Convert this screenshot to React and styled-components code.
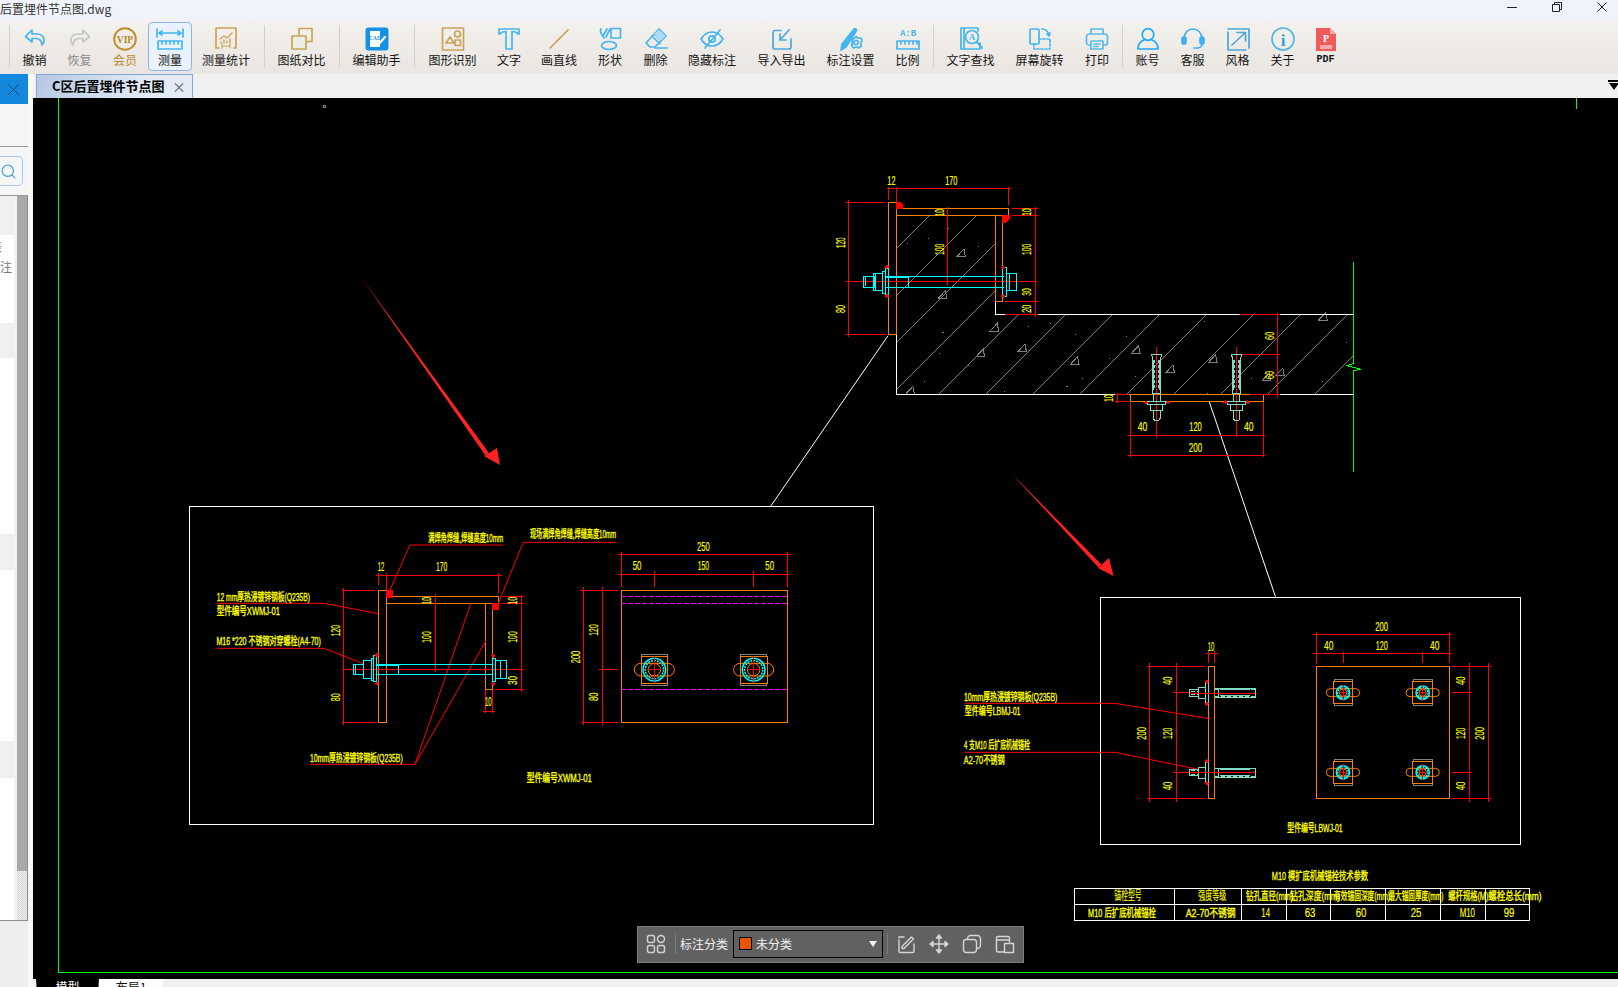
import React from 'react';
import styled, { createGlobalStyle } from 'styled-components';
import { Search } from 'lucide-react';

const GlobalStyle = createGlobalStyle`
    html, body { margin:0; padding:0; background:#efefef; }
    body { font-family:"Noto Sans CJK SC","Liberation Sans",sans-serif; overflow:hidden; }
`;

const Page = styled.div`
    width:1618px;
    height:987px;
    display:flex;
    flex-direction:column;
    overflow:hidden;
`;

/* ---------- title bar ---------- */
const TitleBar = styled.div`
    height:20px;
    flex:none;
    background:#f0f3fb;
    display:flex;
    align-items:flex-start;
    justify-content:space-between;
`;
const TitleText = styled.div`
    font-size:12px;
    line-height:18px;
    color:#333;
    white-space:nowrap;
`;
const WindowButtons = styled.div`
    display:flex;
    align-items:center;
    gap:35px;
    padding:2px 11px 0 0;
`;
const WindowIcon = styled.svg`
    width:10px;
    height:10px;
    display:block;
    fill:none;
    stroke:#222;
    stroke-width:1;
`;

/* ---------- toolbar ---------- */
const Toolbar = styled.div`
    height:54px;
    flex:none;
    box-sizing:border-box;
    background:linear-gradient(#f4f2ee,#e9e5e0);
    display:flex;
    align-items:flex-start;
    padding:2px 0 0 7px;
`;
const Separator = styled.div`
    width:1px;
    height:43px;
    background:#d4d1cd;
    margin:3px ${props => props.$gap || 3}px 0 ${props => props.$gap || 4}px;
    flex:none;
`;
const ToolButton = styled.div`
    width:${props => props.$w}px;
    height:49px;
    flex:none;
    box-sizing:border-box;
    display:flex;
    flex-direction:column;
    align-items:center;
    justify-content:space-between;
    padding:4px 0 3px;
    border:1px solid ${props => props.$active ? '#8fb4ec' : 'transparent'};
    border-radius:4px;
    background:${props => props.$active ? '#eaf3fd' : 'transparent'};
`;
const ToolLabel = styled.span`
    font-family:${props => props.$mono ? '"Liberation Mono",monospace' : 'inherit'};
    font-size:${props => props.$mono ? 10 : 12}px;
    font-weight:${props => props.$mono ? 700 : 400};
    line-height:15px;
    white-space:nowrap;
    color:${props => props.$tone === 'gold' ? '#b98a2e' : props.$tone === 'off' ? '#8a8a8a' : '#141414'};
`;
const IconFrame = styled.svg`
    width:${props => props.$w || 24}px;
    height:24px;
    display:block;
    flex:none;
    fill:none;
    stroke:${props => props.$c || '#45b5ee'};
    stroke-width:1.7;
    stroke-linejoin:round;
    stroke-linecap:round;
`;
const IconText = styled.text`
    font-family:"Liberation Serif",serif;
    font-weight:700;
    stroke:none;
    text-anchor:middle;
`;

const BLUE = '#45b5ee';
const GOLD = '#c9a45a';

const icons = {
    undo: <IconFrame><path d="M9 3 2.5 9.5 9 15v-3.5h4c3.5 0 5.5 2 6 6.5 1.3-1.5 2-3.3 2-5C21 9 17.5 7 14 7H9z" /></IconFrame>,
    redo: <IconFrame $c="#c4c4c4"><path d="M15 3l6.500 6.500L15 15v-3.500h-4c-3.500 0-5.500 2-6 6.500-1.300-1.500-2-3.300-2-5C3 9 6.500 7 10 7h5z" /></IconFrame>,
    vip: (
        <IconFrame $c="#c08f2e" viewBox="0 0 24 24">
            <circle cx="12" cy="12" r="10.800" strokeWidth="2" />
            <IconText x="12" y="15.500" fontSize="9.500" fill="#b5842a">VIP</IconText>
        </IconFrame>
    ),
    measure: (
        <IconFrame $w={28} viewBox="0 0 28 24" strokeWidth="1.300">
            <path d="M1 2v8M27 2v8M3 6h22M3 6l3-2M3 6l3 2M25 6l-3-2M25 6l-3 2" />
            <path d="M2 14h24v8H2zM6 14v3M10 14v3M14 14v3M18 14v3M22 14v3" />
        </IconFrame>
    ),
    stats: (
        <IconFrame $c={GOLD}>
            <path d="M5 21H2V1h20v20h-2" />
            <path d="M6 12l4-3 3 2 5-5M7 16v-1M10 16v-3M13 16v-2M16 16v-4" strokeWidth="1.400" />
            <path d="M8 19h8M8 17v4M16 17v4" strokeWidth="1.200" />
        </IconFrame>
    ),
    compare: (
        <IconFrame $c={GOLD} strokeWidth="2.200">
            <rect x="9" y="1.500" width="13" height="13" />
            <rect x="2" y="9" width="14" height="13" fill="#efece8" />
        </IconFrame>
    ),
    editor: (
        <IconFrame $c="#fff">
            <rect x="0.500" y="0.500" width="23" height="23" rx="3" fill="#1491e3" stroke="none" />
            <path d="M5 4h10v16H5z" fill="#fff" stroke="none" />
            <IconText x="10" y="13" fontSize="5.500" fill="#1491e3">CAD</IconText>
            <path d="M13 18l7-8" strokeWidth="2.200" />
        </IconFrame>
    ),
    recognize: (
        <IconFrame $c={GOLD} strokeWidth="1.500">
            <rect x="1.500" y="1" width="21" height="22" />
            <path d="M5 16l4-6 4 6z" />
            <circle cx="16.500" cy="7" r="3" />
            <rect x="14" y="13" width="5.500" height="5.500" />
        </IconFrame>
    ),
    text: <IconFrame><path d="M2 2h20v5h-1c-1-1.500-2-2.500-6-2.500V22H9V4.500C5 4.500 4 5.500 3 7H2z" /></IconFrame>,
    line: <IconFrame $c="#c9a04e" strokeWidth="2.400"><path d="M3 21 21 3" /></IconFrame>,
    shape: (
        <IconFrame strokeWidth="1.600">
            <rect x="13" y="1.500" width="9.500" height="9.500" />
            <ellipse cx="11" cy="18.500" rx="7.500" ry="4" />
            <path d="M3 2c-2 3 1 6 3 9M9 2 5 9M12 2 8 10" />
        </IconFrame>
    ),
    eraser: (
        <IconFrame strokeWidth="1.600">
            <path d="M15 2l7 7-11 11H6l-4-4z" />
            <path d="M8 9l8 8" />
            <path d="M10 7l5-5 7 7-5 5z" fill="#a9ddf6" strokeWidth="0.800" />
            <path d="M11 21h12" />
        </IconFrame>
    ),
    hide: (
        <IconFrame strokeWidth="1.700">
            <path d="M1 12c3-5 7-7 11-7s8 2 11 7c-3 5-7 7-11 7s-8-2-11-7z" />
            <circle cx="12" cy="12" r="3.200" />
            <path d="M5 21 20 3" />
        </IconFrame>
    ),
    transfer: (
        <IconFrame $c="#4aa8dc" strokeWidth="1.800">
            <path d="M11 3.500H5a2 2 0 0 0-2 2V20a2 2 0 0 0 2 2h14a2 2 0 0 0 2-2v-8" />
            <path d="M19 3 10 13M10 7v6h6" />
        </IconFrame>
    ),
    settings: (
        <IconFrame strokeWidth="1.400">
            <path d="M15 2c1-1 2.500 0 2.500 1.500L7 20l-5 3 1-6z" fill={BLUE} />
            <circle cx="17" cy="15.500" r="2.200" />
            <path d="M17 9.500l2 1.500 3 0 1 3-1.500 2 1 3-3 2-2-1-3 1-2-3 1-2-1-3 3-2z" fill="#efece8" />
            <circle cx="17" cy="15.500" r="2.200" />
        </IconFrame>
    ),
    ratio: (
        <IconFrame $w={24} strokeWidth="1.400">
            <IconText x="12" y="9" fontSize="9" fill={BLUE} style={{ fontFamily: '"Liberation Mono",monospace' }}>A:B</IconText>
            <path d="M1 14h22v8H1zM5 14v3M9 14v3M13 14v3M17 14v3M21 14v3" />
        </IconFrame>
    ),
    find: (
        <IconFrame strokeWidth="1.500">
            <path d="M21 16v6H2V1h17v3M5 1v21" />
            <circle cx="13" cy="10" r="6.500" />
            <path d="M18 15l5 6" strokeWidth="2" />
            <IconText x="13" y="13" fontSize="8.500" fill={BLUE}>A</IconText>
        </IconFrame>
    ),
    rotate: (
        <IconFrame strokeWidth="1.500">
            <rect x="2" y="2" width="9" height="15" rx="1" />
            <path d="M11 12h11v10H6v-5" strokeDasharray="2 2" />
            <path d="M14 2c3 0 6 2 7 6M19 7l2 2 1-3" />
        </IconFrame>
    ),
    print: (
        <IconFrame $c="#58bce8" strokeWidth="1.600">
            <path d="M6 7V2h12v5" />
            <rect x="1.500" y="7" width="21" height="11" rx="2.500" />
            <path d="M6 14v8h12v-8zM9 17h6M9 19.500h4" fill="#efece8" />
        </IconFrame>
    ),
    account: (
        <IconFrame $c="#1eaaf8" strokeWidth="2">
            <circle cx="12" cy="7.500" r="5.800" />
            <path d="M8 13c-4 1.500-6 5-6 9h20c0-4-2-7.500-6-9" />
        </IconFrame>
    ),
    support: (
        <IconFrame $c="#3fb0ec" strokeWidth="1.800">
            <path d="M3 12C3 6 7 2 12 2s9 4 9 10v5c0 2-2 4-5 4h-3" />
            <rect x="1" y="10" width="4" height="7" rx="2" fill="#3fb0ec" />
            <rect x="19" y="10" width="4" height="7" rx="2" fill="#3fb0ec" />
        </IconFrame>
    ),
    theme: (
        <IconFrame $c="#4aa8dc" strokeWidth="1.700">
            <path d="M2 5v18h18M2 2h21v19" />
            <path d="M6 18 19 6M11 5.500h8.500V14" />
        </IconFrame>
    ),
    about: (
        <IconFrame $c="#55b6e6" strokeWidth="1.600">
            <circle cx="12" cy="12" r="11" />
            <IconText x="12" y="18.500" fontSize="17" fill="#3b9fd4">i</IconText>
        </IconFrame>
    ),
    pdf: (
        <IconFrame $w={20} viewBox="0 0 20 24" $c="none">
            <path d="M0 1h14l6 6v17H0z" fill="#ef5b5b" />
            <path d="M14 1l6 6h-6z" fill="#f6a9a9" />
            <rect x="4" y="18" width="12" height="4" fill="#f6a9a9" />
            <IconText x="10" y="15" fontSize="10" fill="#fff">P</IconText>
        </IconFrame>
    ),
};

const tools = [
    { sep: true, gap: 2 },
    { label: '撤销', icon: 'undo', w: 45 },
    { label: '恢复', icon: 'redo', w: 45, tone: 'off' },
    { label: '会员', icon: 'vip', w: 46, tone: 'gold' },
    { label: '测量', icon: 'measure', w: 44, active: true },
    { label: '测量统计', icon: 'stats', w: 68 },
    { sep: true },
    { label: '图纸对比', icon: 'compare', w: 67 },
    { sep: true },
    { label: '编辑助手', icon: 'editor', w: 67 },
    { sep: true },
    { label: '图形识别', icon: 'recognize', w: 69 },
    { label: '文字', icon: 'text', w: 44 },
    { label: '画直线', icon: 'line', w: 56 },
    { label: '形状', icon: 'shape', w: 46 },
    { label: '删除', icon: 'eraser', w: 45 },
    { label: '隐藏标注', icon: 'hide', w: 68 },
    { label: '导入导出', icon: 'transfer', w: 71 },
    { label: '标注设置', icon: 'settings', w: 67 },
    { label: '比例', icon: 'ratio', w: 47 },
    { sep: true, gap: 2 },
    { label: '文字查找', icon: 'find', w: 69 },
    { label: '屏幕旋转', icon: 'rotate', w: 69 },
    { label: '打印', icon: 'print', w: 46 },
    { sep: true, gap: 2 },
    { label: '账号', icon: 'account', w: 45 },
    { label: '客服', icon: 'support', w: 45 },
    { label: '风格', icon: 'theme', w: 45 },
    { label: '关于', icon: 'about', w: 45 },
    { label: 'PDF', icon: 'pdf', w: 41, mono: true },
];

/* ---------- workspace ---------- */
const Workspace = styled.div`
    flex:1;
    min-height:0;
    display:flex;
`;
const Sidebar = styled.div`
    width:28px;
    flex:none;
    background:#eeeeee;
    display:flex;
    flex-direction:column;
`;
const CloseTile = styled.div`
    height:30px;
    background:#1488dc;
    display:flex;
    align-items:center;
    justify-content:center;
    flex:none;
    border-right:1px solid #1488dc;
`;
const SideBlank = styled.div`
    height:42px;
    background:#f6f6f6;
    border-bottom:1px solid #9a9a9a;
    flex:none;
`;
const SearchRow = styled.div`
    height:49px;
    flex:none;
    box-sizing:border-box;
    background:#f6f6f6;
    padding:9px 5px 10px 0;
    border-bottom:1px solid #9a9a9a;
`;
const SearchBox = styled.div`
    height:30px;
    box-sizing:border-box;
    border:1px solid #a6c8f4;
    border-left:none;
    border-radius:0 5px 5px 0;
    display:flex;
    align-items:center;
    justify-content:flex-start;
    color:#4da9d8;
`;
const ListPane = styled.div`
    height:724px;
    flex:none;
    display:flex;
    border-right:1px solid #8d8d99;
    border-bottom:1px solid #8d8d99;
    background:#f2f2f2;
`;
const ListRows = styled.div`
    width:14px;
    flex:none;
    display:flex;
    flex-direction:column;
    overflow:hidden;
`;
const ListRow = styled.div`
    height:${props => props.$h}px;
    flex:none;
    overflow:hidden;
    box-sizing:border-box;
    background:${props => props.$grey ? '#efefef' : '#fff'};
    font-size:12px;
    color:#777;
    line-height:20px;
    padding-top:${props => props.$pad || 0}px;
    text-indent:-10px;
    white-space:nowrap;
`;
const Track = styled.div`
    width:10px;
    margin-left:3px;
    flex:none;
    display:flex;
    flex-direction:column;
    background:repeating-conic-gradient(#d0d0d0 0 25%,#f6f6f6 0 50%) 0 0/2px 2px;
`;
const Thumb = styled.div`
    height:675px;
    background:#a9a9a9;
`;
const Gutter = styled.div`
    width:5px;
    flex:none;
    background:#f8f8f8;
`;
const Main = styled.div`
    flex:1;
    min-width:0;
    display:flex;
    flex-direction:column;
`;
const TabBar = styled.div`
    height:24px;
    flex:none;
    background:#f0f0f0;
    padding-left:3px;
    display:flex;
    position:relative;
`;
const DocTab = styled.div`
    width:157px;
    box-sizing:border-box;
    height:24px;
    border:1px solid #86a7d6;
    border-bottom:none;
    background:linear-gradient(100deg,#b4c9e2,#e2ebf6 70%);
    display:flex;
    align-items:center;
    justify-content:space-between;
    padding:0 6px 2px 15px;
    font-size:13px;
    font-weight:700;
    color:#000;
    white-space:nowrap;
`;
const DocClose = styled.span`
    font-size:14px;
    font-weight:400;
    color:#666;
    line-height:1;
`;
const TabMenu = styled.div`
    position:absolute;
    right:-1px;
    top:6px;
    width:11px;
    display:flex;
    flex-direction:column;
    align-items:center;
    &::before{
        content:"";
        width:11px;
        height:2px;
        background:#000;
        margin-bottom:1px;
    }
    &::after{
        content:"";
        border-left:5.500px solid transparent;
        border-right:5.500px solid transparent;
        border-top:7px solid #000;
    }
`;
const Canvas = styled.div`
    flex:1;
    min-height:0;
    background:#000;
    position:relative;
    overflow:hidden;
`;
const Drawing = styled.svg`
    display:block;
    width:1585px;
    height:881px;
`;
const BottomTabs = styled.div`
    height:8px;
    flex:none;
    background:#efefef;
    display:flex;
    overflow:hidden;
`;
const SheetTab = styled.div`
    height:26px;
    flex:none;
    width:${props => props.$w}px;
    margin-left:${props => props.$ml || 0}px;
    background:${props => props.$active ? '#000' : '#fff'};
    color:${props => props.$active ? '#fff' : '#111'};
    font-size:12px;
    line-height:15px;
    text-align:center;
    clip-path:polygon(0 0,100% 0,97% 100%,3% 100%);
`;

/* ---------- floating annotation bar ---------- */
const FloatBar = styled.div`
    position:absolute;
    left:604px;
    top:828px;
    width:387px;
    height:37px;
    box-sizing:border-box;
    background:#616161;
    border:1px solid #7c7c7c;
    padding-bottom:2px;
    display:flex;
    align-items:center;
    color:#f2f2f2;
    font-size:12px;
`;
const FloatIcon = styled.svg`
    width:20px;
    height:20px;
    display:block;
    flex:none;
    fill:none;
    stroke:#d6d6d6;
    stroke-width:1.400;
    stroke-linejoin:round;
    stroke-linecap:round;
    margin-left:${props => props.$ml || 0}px;
`;
const FloatDivider = styled.div`
    width:1px;
    height:21px;
    background:#7c7c7c;
    flex:none;
    margin:0 ${props => props.$r}px 0 ${props => props.$l}px;
`;
const CategorySelect = styled.div`
    width:150px;
    height:28px;
    box-sizing:border-box;
    border:1px solid #000;
    margin-left:5px;
    display:flex;
    align-items:center;
    padding:0 5px;
    flex:none;
`;
const Swatch = styled.span`
    width:13px;
    height:13px;
    box-sizing:border-box;
    background:#e85500;
    border:1px solid #000;
    margin-right:4px;
    flex:none;
`;
const SelectArrow = styled.span`
    margin-left:auto;
    border-left:4.500px solid transparent;
    border-right:4.500px solid transparent;
    border-top:6px solid #f4f4f4;
`;

/* ---------- CAD primitives ---------- */
const Wire = styled.path`
    fill:${props => props.$fill || 'none'};
    stroke:${props => props.$c};
    stroke-width:1;
    vector-effect:non-scaling-stroke;
    shape-rendering:crispEdges;
`;
const Ring = styled.circle`
    fill:none;
    stroke:${props => props.$c};
    stroke-width:${props => props.$w || 1};
    stroke-dasharray:${props => props.$dash || 'none'};
    vector-effect:non-scaling-stroke;
`;
const CadText = styled.text`
    font-family:"Liberation Sans","Noto Sans CJK SC",sans-serif;
    font-size:${props => props.$size || 12}px;
    fill:#ffff00;
    stroke:#ffff00;
    stroke-width:${props => props.$bold ? 0.35 : 0.15};
    text-anchor:middle;
    dominant-baseline:central;
`;

const RED = '#ff0000';
const ORANGE = '#ff8000';
const CYAN = '#00ffff';
const TEAL = '#7fdcc0';
const WHITE = '#ffffff';
const GREY = '#808080';
const MAGENTA = '#ff00ff';

// a part of the drawing, written in the coordinates of its own crop
const Sheet = ({ ox, oy, sx = 1 / 3, sy = 1 / 3, labels = [], children }) => (
    <>
        <g transform={`translate(${ox} ${oy}) scale(${sx} ${sy})`}>{children}</g>
        {labels.map(([text, cx, cy, w, rot], i) => {
            const x = ox + cx * sx;
            const y = oy + cy * sy;
            const len = (w || text.length * 11) * (rot ? sy : sx);
            return (
                <CadText
                    key={i}
                    x={x}
                    y={y}
                    $size={text.length > 4 ? 11 : 12}
                    $bold={text.length > 4}
                    textLength={len}
                    lengthAdjust="spacingAndGlyphs"
                    transform={rot ? `rotate(-90 ${x} ${y})` : undefined}
                >
                    {text}
                </CadText>
            );
        })}
    </>
);

const Dot = ({ x, y, r = 4 }) => <Wire $c={RED} $fill={RED} d={`M${x - r} ${y}L${x} ${y - r}L${x + r} ${y}L${x} ${y + r}Z`} />;

const BoltPlan = ({ cx, cy, hw, hh, sw, sh, r }) => (
    <g>
        <Wire $c={GREY} d={`M${cx - hw + 2} ${cy - hh}v-6h${hw * 2 - 4}v6M${cx - hw + 2} ${cy + hh}v6h${hw * 2 - 4}v-6`} />
        <Wire $c={ORANGE} d={`M${cx - hw} ${cy - hh}h${hw * 2}v${hh * 2}h${-hw * 2}z`} />
        <rect x={cx - sw} y={cy - sh} width={sw * 2} height={sh * 2} rx={sh} ry={sh} fill="none" stroke={ORANGE} strokeWidth="1" vectorEffect="non-scaling-stroke" />
        <Ring cx={cx} cy={cy} r={r} $c={CYAN} $w={1.500} />
        <Ring cx={cx} cy={cy} r={r * 0.8} $c={CYAN} $w={1.500} $dash="2 1" />
        <Ring cx={cx} cy={cy} r={r * 0.55} $c={ORANGE} />
        <Wire $c={RED} d={`M${cx - r * 0.6} ${cy}h${r * 1.200}M${cx} ${cy - r * 1.200}v${r * 2.400}`} />
    </g>
);

// bolt drawn through the wall plate, section view
const ThroughBolt = ({ d }) => <Wire $c={CYAN} d={d} />;

const AnchorDown = ({ cx }) => (
    <g>
        <Wire $c={TEAL} d={`M${cx - 14} 583h28l-3 12v105h-22v-105zM${cx - 8} 600v90M${cx + 8} 600v90M${cx - 9} 703v22M${cx + 9} 703v22M${cx - 24} 725h48v7h-48zM${cx - 16} 732h32v20h-32zM${cx - 9} 752h18v24l-4 5h-10l-4-5z`} />
        <Wire $c={TEAL} style={{ strokeDasharray: '3 2' }} d={`M${cx - 11} 595v105M${cx + 11} 595v105M${cx - 5} 600v90M${cx + 5} 600v90`} />
    </g>
);

const AnchorSide = ({ cy }) => (
    <g>
        <Wire $c={TEAL} d={`M794 ${cy - 13}H915V${cy + 14}H794M806 ${cy - 13}V${cy + 14}M810 ${cy - 9}H900M810 ${cy + 9}H900M745 ${cy - 15}h20v32h-20zM765 ${cy - 30}h9v62h-9zM718 ${cy - 10}h27v20h-27z`} />
        <Wire $c={TEAL} style={{ strokeDasharray: '4 2' }} d={`M794 ${cy - 11}H915M794 ${cy + 12}H915M722 ${cy - 5}H745M722 ${cy + 5}H745`} />
        <Wire $c={RED} d={`M722 ${cy + 1}H915`} />
        <Dot x={770} y={cy - 33} />
        <Dot x={770} y={cy + 33} />
    </g>
);

const triangles = [
    [435, 280], [385, 405], [525, 503], [487, 580], [600, 565], [742, 603], [907, 570],
    [297, 692], [1000, 628], [1115, 597], [1260, 652], [1297, 637], [1413, 470],
];
const specks = [
    [345, 235], [400, 205], [290, 250], [480, 260], [385, 518], [375, 580], [335, 663], [550, 695],
    [455, 615], [615, 500], [742, 523], [882, 528], [675, 490], [835, 595], [763, 655], [1092, 485],
    [1218, 655], [1475, 547], [1410, 663], [1100, 700], [720, 680], [905, 650],
];

// concrete hatch, in page coordinates
const hatch = Array.from({ length: 17 }, (_, i) => {
    const x = 938.7 + (i - 6) * 47;
    return `M${x} 394.300L${x + 180} 214.300`;
}).join('');

const Concrete = () => (
    <g>
        <clipPath id="concrete">
            <path d="M896.600 215.300H995.300V314.300H1353.500V394.300H896.600Z" />
        </clipPath>
        <g clipPath="url(#concrete)">
            <Wire $c={GREY} d={hatch} style={{ shapeRendering: 'auto' }} />
        </g>
    </g>
);

const TopDetail = () => (
    <Sheet
        ox={800}
        oy={160}
        sx={0.37}
        labels={[
            ['12', 247, 62], ['170', 409, 62], ['120', 110, 248, 32, 1], ['80', 110, 447, 24, 1],
            ['10', 378, 158, 22, 1], ['100', 378, 268, 34, 1], ['10', 614, 156, 22, 1], ['100', 613, 268, 34, 1],
            ['30', 613, 396, 22, 1], ['20', 613, 446, 24, 1], ['60', 1270, 527, 24, 1], ['60', 1270, 645, 24, 1],
            ['10', 836, 714, 22, 1], ['40', 926, 802, 26], ['120', 1069, 802, 34], ['40', 1213, 802, 26], ['200', 1069, 863, 36],
        ]}
    >
        {triangles.map(([x, y], i) => (
            <Wire key={i} $c={GREY} d={`M${x - 11} ${y + 10}L${x + 8} ${y - 13}L${x + 12} ${y + 10}Z`} />
        ))}
        {specks.map(([x, y], i) => <Wire key={i} $c={GREY} d={`M${x} ${y}h3`} />)}
        <Wire $c={WHITE} d="M528 424V463H1496M261 523V703H1496" />
        <Wire $c={WHITE} d="M238 527L-80 1040" style={{ shapeRendering: 'auto' }} />
        <Wire $c={WHITE} d="M1106 725L1178 960L1285 1310" style={{ shapeRendering: 'auto' }} />
        <Wire $c="#00ff00" d="M1496 306V610L1478 617L1516 628L1496 632V935" />
        <Wire $c={ORANGE} d="M238 127H261V523H238ZM261 145H564V166H261M528 166V424H548V166M893 703H1253V725H893Z" />
        <Wire $c={RED} $fill={RED} d="M261 127H270L277 135V146H261ZM546 166H565V175L555 186H546Z" />
        <Wire
            $c={RED}
            d="M234 85H570M238 80V120M261 80V125M564 80V135M131 120V530M125 127H230M125 365H640M125 523H232M398 140V375M573 145H642M573 166H642M553 424H642M555 463H642M637 140V470M1190 463H1298M1180 583H1298M1216 703H1298M1291 460V710M852 703H890M852 725H890M859 698V730M886 826H1258M886 886H1258M893 730V892M964 560V835M1180 560V832M1253 725V892"
        />
        <ThroughBolt d="M232 349H550M232 382H550M232 352H294V382M172 349H200V382H172ZM178 352V379M198 340H222V392H198ZM205 340V392M222 335H230V401H222ZM230 325H238V405H230ZM548 322H558V408H548ZM558 340H586V392H558ZM566 340V392" />
        <AnchorDown cx={964} />
        <AnchorDown cx={1180} />
        <Dot x={235} y={321} /><Dot x={235} y={408} /><Dot x={549} y={323} /><Dot x={549} y={408} />
        <Dot x={935} y={727} /><Dot x={995} y={727} /><Dot x={1150} y={727} /><Dot x={1210} y={727} />
    </Sheet>
);

const LeftSection = () => (
    <Sheet
        ox={190}
        oy={510}
        labels={[
            ['12', 573, 172, 20], ['170', 755, 172, 34], ['120', 437, 362, 34, 1], ['80', 437, 562, 24, 1],
            ['10', 711, 272, 22, 1], ['100', 711, 381, 34, 1], ['10', 970, 272, 24, 1], ['100', 970, 381, 34, 1],
            ['30', 970, 511, 26, 1], ['10', 895, 577, 20],
            ['12 mm厚热浸镀锌钢板(Q235B)', 220, 260, 280],
            ['型件编号XWMJ-01', 175, 304, 190],
            ['M16 *220 不锈钢对穿螺栓(A4-70)', 236, 394, 313],
            ['10mm厚热浸镀锌钢板(Q235B)', 499, 743, 278],
            ['满焊角焊缝,焊缝高度10mm', 827, 83, 225],
            ['现场满焊角焊缝,焊缝高度10mm', 1149, 72, 258],
        ]}
    >
        <Wire $c={ORANGE} d="M565 241H590V637H565ZM590 259H926V281H590M886 281V539H908V281" />
        <Wire $c={RED} $fill={RED} d="M588 240H606V262H588ZM906 281H924V298H906Z" />
        <Wire
            $c={RED}
            d="M558 196H935M565 190V225M590 190V240M926 190V250M460 233V645M455 241H556M455 479H1003M455 637H558M737 253V487M995 255V546M935 259H1003M935 281H1003M915 539H1003M880 603H915M886 541V608M908 541V608"
        />
        <Wire $c={RED} style={{ shapeRendering: 'auto' }} d="M80 280H403L565 311M80 415H403L520 461M360 763H675L843 279M675 763L888 392M660 105H940M660 105L600 240M1278 97H1000L925 280" />
        <ThroughBolt d="M557 463H908M557 493H908M557 465H626V493M490 463H520V493H490ZM497 463V493M520 450H544V506H520ZM543 445H551V511H543ZM550 435H558V515H550ZM908 445H916V515H908ZM916 450H950V506H916ZM930 450V506" />
        <Dot x={561} y={435} /><Dot x={561} y={521} /><Dot x={910} y={437} /><Dot x={910} y={521} />
    </Sheet>
);

const LeftElevation = () => (
    <Sheet
        ox={540}
        oy={510}
        labels={[
            ['250', 490, 110, 38], ['50', 291, 167, 26], ['150', 490, 167, 34], ['50', 689, 167, 26],
            ['200', 107, 441, 38, 1], ['120', 163, 360, 34, 1], ['80', 163, 560, 26, 1],
            ['型件编号XWMJ-01', 58, 804, 195],
        ]}
    >
        <Wire $c={ORANGE} d="M244 241H743V637H244Z" />
        <Wire $c={MAGENTA} style={{ strokeDasharray: '5 2' }} d="M244 259H743M244 280H743M244 538H743" />
        <Wire $c={RED} d="M235 133H752M235 193H750M244 125V230M343 183V230M640 183V230M743 125V230M130 230V645M187 230V645M120 241H233M177 479H233M123 637H233" />
        <BoltPlan cx={343} cy={479} hw={40} hh={41} sw={60} sh={19} r={34} />
        <BoltPlan cx={641} cy={479} hw={41} hh={41} sw={60} sh={19} r={34} />
    </Sheet>
);

const RightSection = () => (
    <Sheet
        ox={950}
        oy={600}
        labels={[
            ['10', 783, 140, 20], ['40', 653, 242, 26, 1], ['120', 654, 400, 34, 1], ['40', 653, 558, 26, 1], ['200', 575, 400, 38, 1],
            ['10mm厚热浸镀锌钢板(Q235B)', 182, 290, 280],
            ['型件编号LBMJ-01', 128, 333, 167],
            ['4 支M10 后扩底机械锚栓', 141, 435, 198],
            ['A2-70不锈钢', 103, 480, 123],
        ]}
    >
        <Wire $c={ORANGE} d="M775 198H794V596H775Z" />
        <Wire $c={RED} d="M592 199H765M592 595H765M598 190V605M680 190V605M670 278H722M670 517H722M768 160H803M775 152V188M794 152V188" />
        <Wire $c={RED} style={{ shapeRendering: 'auto' }} d="M45 310H495L780 356M45 457H495L740 507" />
        <AnchorSide cy={278} />
        <AnchorSide cy={517} />
    </Sheet>
);

const RightElevation = () => (
    <Sheet
        ox={1250}
        oy={600}
        labels={[
            ['200', 395, 80, 38], ['40', 236, 137, 28], ['120', 395, 137, 36], ['40', 554, 137, 28],
            ['40', 633, 242, 26, 1], ['120', 633, 400, 34, 1], ['40', 633, 558, 26, 1], ['200', 691, 400, 38, 1],
            ['型件编号LBWJ-01', 195, 684, 166],
        ]}
    >
        <Wire $c={ORANGE} d="M199 199H599V596H199Z" />
        <Wire $c={RED} d="M190 103H605M190 160H605M199 95V192M280 155V188M517 155V188M599 95V188M658 190V605M716 190V605M606 199H722M606 277H665M606 517H665M606 595H722" />
        <BoltPlan cx={279} cy={278} hw={29} hh={33} sw={50} sh={12} r={20} />
        <BoltPlan cx={518} cy={278} hw={30} hh={33} sw={50} sh={12} r={20} />
        <BoltPlan cx={279} cy={517} hw={29} hh={33} sw={50} sh={12} r={20} />
        <BoltPlan cx={518} cy={517} hw={30} hh={33} sw={50} sh={12} r={20} />
    </Sheet>
);

const ParamsTable = () => (
    <Sheet
        ox={1060}
        oy={855}
        labels={[
            ['M10 模扩底机械锚栓技术参数', 780, 62, 289],
            ['锚栓型号', 204, 124, 82], ['强度等级', 457, 124, 84],
            ['钻孔直径(mm)', 629, 124, 142], ['钻孔深度(mm)', 765, 124, 150], ['有效锚固深度(mm)', 906, 124, 168],
            ['最大锚固厚度(mm)', 1068, 124, 165], ['螺杆规格(M)', 1225, 124, 120], ['螺栓总长(mm)', 1365, 124, 160],
            ['M10 后扩底机械锚栓', 186, 173, 204], ['A2-70不锈钢', 452, 173, 150],
            ['14', 617, 173, 26], ['63', 750, 173, 32], ['60', 903, 173, 32], ['25', 1068, 173, 32], ['M10', 1222, 173, 46], ['99', 1347, 173, 32],
        ]}
    >
        <Wire $c={WHITE} d="M43 100H1409V197H43ZM43 149H1409M343 100V197M545 100V197M680 100V197M812 100V197M977 100V197M1142 100V197M1277 100V197" />
    </Sheet>
);

const Arrow = ({ tail, shaft, tip, wing }) => (
    <path d={`M${tail}L${shaft}L${wing[0]}L${tip}L${wing[1]}L${shaft.map((v, i) => v + [-3.5, 2.5][i]).join(' ')}Z`} fill="#ff2222" />
);

const CadDrawing = () => (
    <Drawing viewBox="33 98 1585 881">
        <Wire $c="#00ff00" d="M58.500 90V972.500H1640" />
        <Wire $c="#00ff00" d="M1576.500 98V109" />
        <Wire $c={GREY} d="M323 105h2v2h-2z" />
        <Wire $c={WHITE} d="M189.500 506H873.500V824.500H189.500Z" />
        <Wire $c={WHITE} d="M1100.500 597.500H1520.500V844.500H1100.500Z" />
        <Concrete />
        <TopDetail />
        <LeftSection />
        <LeftElevation />
        <RightSection />
        <RightElevation />
        <ParamsTable />
        <Arrow tail={[361, 277]} shaft={[489, 453]} wing={[[484, 456], [497, 448]]} tip={[500, 465]} />
        <Arrow tail={[1011, 473]} shaft={[1102, 565]} wing={[[1098, 568], [1109, 558]]} tip={[1113.500, 576]} />
    </Drawing>
);

export default function App() {
    return (
        <Page>
            <GlobalStyle />
            <TitleBar>
                <TitleText>后置埋件节点图.dwg</TitleText>
                <WindowButtons>
                    <WindowIcon viewBox="0 0 10 10"><path d="M0 5.500H10" /></WindowIcon>
                    <WindowIcon viewBox="0 0 10 10"><path d="M0.500 2.500h7v7h-7zM2.500 2.500v-2h7v7H7.500" /></WindowIcon>
                    <WindowIcon viewBox="0 0 10 10"><path d="M0.500 0.500l9 9M9.500 0.500l-9 9" /></WindowIcon>
                </WindowButtons>
            </TitleBar>
            <Toolbar>
                {tools.map((tool, i) => tool.sep
                    ? <Separator key={i} $gap={tool.gap} />
                    : (
                        <ToolButton key={tool.label} $w={tool.w} $active={tool.active}>
                            {icons[tool.icon]}
                            <ToolLabel $tone={tool.tone} $mono={tool.mono}>{tool.label}</ToolLabel>
                        </ToolButton>
                    ))}
            </Toolbar>
            <Workspace>
                <Sidebar>
                    <CloseTile>
                        <svg width="13" height="13" viewBox="0 0 13 13" fill="none" stroke="#134a78"><path d="M1 1l11 11M12 1L1 12" /></svg>
                    </CloseTile>
                    <SideBlank />
                    <SearchRow>
                        <SearchBox><Search size={17} strokeWidth={1.800} /></SearchBox>
                    </SearchRow>
                    <ListPane>
                        <ListRows>
                            <ListRow $h={39} $grey />
                            <ListRow $h={88} $pad={2}>表<br />注</ListRow>
                            <ListRow $h={35} $grey />
                            <ListRow $h={176} />
                            <ListRow $h={36} $grey />
                            <ListRow $h={171} />
                            <ListRow $h={37} $grey />
                            <ListRow $h={142} />
                        </ListRows>
                        <Track><Thumb /></Track>
                    </ListPane>
                </Sidebar>
                <Gutter />
                <Main>
                    <TabBar>
                        <DocTab>C区后置埋件节点图<DocClose>×</DocClose></DocTab>
                        <TabMenu />
                    </TabBar>
                    <Canvas>
                        <CadDrawing />
                        <FloatBar>
                            <FloatIcon $ml={8} viewBox="0 0 20 20">
                                <rect x="1.500" y="1.500" width="7" height="7" rx="2" />
                                <rect x="11.500" y="1.500" width="7" height="7" rx="3.500" />
                                <rect x="1.500" y="11.500" width="7" height="7" rx="2" />
                                <rect x="11.500" y="11.500" width="7" height="7" rx="2" />
                            </FloatIcon>
                            <FloatDivider $l={9} $r={4} />
                            <span>标注分类</span>
                            <CategorySelect>
                                <Swatch />
                                未分类
                                <SelectArrow />
                            </CategorySelect>
                            <FloatDivider $l={4} $r={0} />
                            <FloatIcon $ml={8} viewBox="0 0 20 20">
                                <path d="M8 3H3v1M3 6v11.500c0 .5.500 1 1 1h13c.5 0 1-.5 1-1V10" />
                                <path d="M6 14.500v-2L15.500 3l2 2-9.500 9.500z" />
                            </FloatIcon>
                            <FloatIcon $ml={13} viewBox="0 0 20 20">
                                <path d="M10 1v18M1 10h18M10 1L7.500 4h5zM10 19l-2.500-3h5zM1 10l3-2.500v5zM19 10l-3-2.500v5z" />
                            </FloatIcon>
                            <FloatIcon $ml={13} viewBox="0 0 20 20">
                                <rect x="1.500" y="5.500" width="13" height="13" rx="3" />
                                <path d="M5.500 5.500V4.500c0-1.500 1.500-3 3-3h7c1.500 0 3 1.500 3 3v7c0 1.500-1.500 3-3 3h-1" />
                            </FloatIcon>
                            <FloatIcon $ml={13} viewBox="0 0 20 20">
                                <path d="M9 18H3c-1 0-1.500-.5-1.500-1.500V4c0-1 .5-1.500 1.500-1.500h10c1 0 1.500.5 1.500 1.500v4M2 6h12" />
                                <rect x="9.500" y="9.500" width="9" height="9" />
                            </FloatIcon>
                        </FloatBar>
                    </Canvas>
                    <BottomTabs>
                        <SheetTab $w={63} $ml={3} $active>模型</SheetTab>
                        <SheetTab $w={64}>布局1</SheetTab>
                    </BottomTabs>
                </Main>
            </Workspace>
        </Page>
    );
}
